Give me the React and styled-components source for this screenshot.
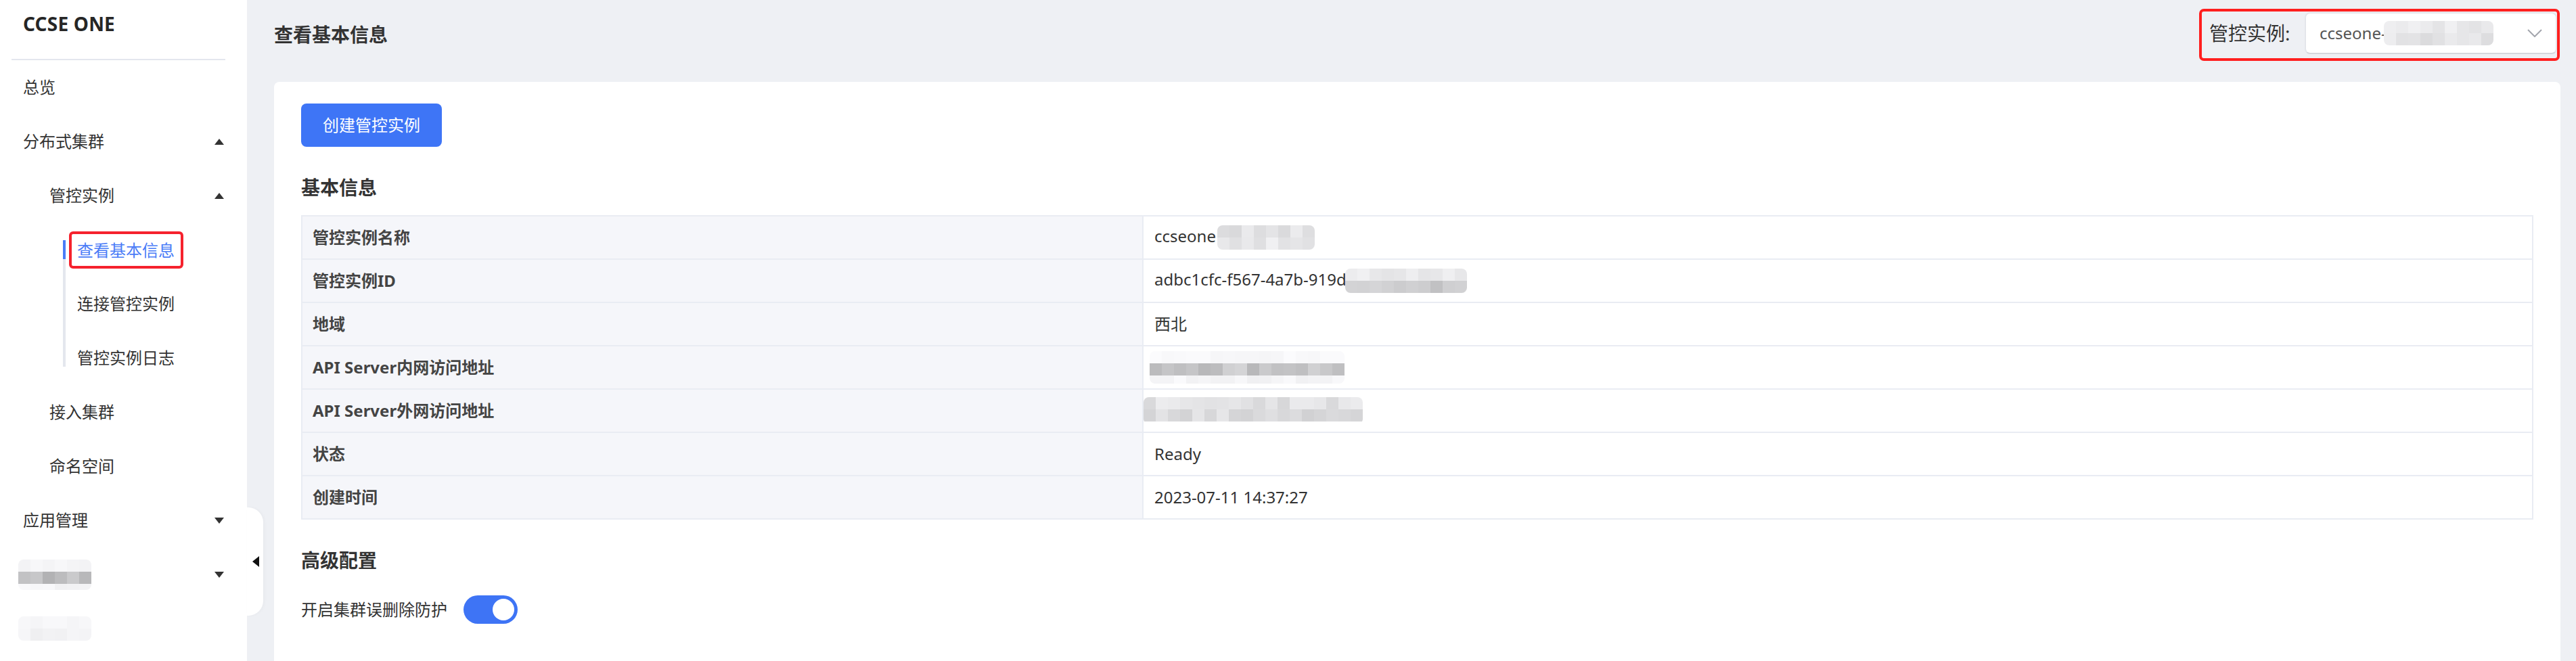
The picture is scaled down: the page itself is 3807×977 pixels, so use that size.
import React from 'react';
import styled, { createGlobalStyle } from 'styled-components';

const GlobalStyle = createGlobalStyle`
  html, body { margin: 0; padding: 0; }
  body {
    font-family: "Noto Sans", "Noto Sans CJK SC", sans-serif;
    color: #333;
    background: #eef0f4;
  }
  * { box-sizing: border-box; }
`;

const Page = styled.div`
  display: flex;
  height: 100vh;
  min-height: 977px;
  overflow: hidden;
`;

/* ---------- Sidebar ---------- */
const Sidebar = styled.aside`
  position: relative;
  z-index: 2;
  flex: none;
  width: 365px;
  background: #fff;
`;

const Brand = styled.div`
  height: 70px;
  padding-left: 34px;
  font-size: 28px;
  font-weight: 700;
  line-height: 70px;
  color: #262626;
  letter-spacing: 0.2px;
`;

const Divider = styled.div`
  height: 2px;
  margin: 17px 32px 0 17px;
  background: #e3e6ee;
`;

const Menu = styled.nav`
  display: flex;
  flex-direction: column;
`;

const indent = { 1: 34, 2: 73, 3: 114 };

const MenuItem = styled.div`
  position: relative;
  display: flex;
  align-items: center;
  justify-content: space-between;
  height: 80px;
  padding: 0 34px 0 ${(p) => indent[p.$level]}px;
  font-size: 24px;
  line-height: 32px;
  color: ${(p) => (p.$active ? '#4a7cf7' : '#333')};
  ${(p) =>
    p.$active &&
    `
    &::before {
      content: '';
      position: absolute;
      left: 93px;
      top: 26px;
      width: 4px;
      height: 28px;
      background: #4a7cf7;
    }
  `}
`;

const SubGroup = styled.div`
  position: relative;
  &::before {
    content: '';
    position: absolute;
    left: 93px;
    top: 26px;
    bottom: 27px;
    width: 4px;
    background: #e4e7ee;
  }
`;

const Highlight = styled.span`
  display: inline-block;
  margin-left: -12px;
  padding: 8px 9px 8px 8px;
  border: 4px solid #f5222d;
  border-radius: 6px;
  line-height: 31px;
`;

const Caret = styled.span`
  flex: none;
  width: 0;
  height: 0;
  border-left: 7.5px solid transparent;
  border-right: 7.5px solid transparent;
  ${(p) =>
    p.$dir === 'up'
      ? 'border-bottom: 9px solid #333;'
      : 'border-top: 9px solid #333;'}
`;

const CollapseTab = styled.div`
  position: absolute;
  left: 100%;
  top: 750px;
  width: 24px;
  height: 160px;
  display: flex;
  align-items: center;
  padding-left: 8px;
  background: #fff;
  border-radius: 0 22px 22px 0;
  box-shadow: 2px 0 4px rgba(0, 0, 0, 0.03);
`;

const TabArrow = styled.span`
  width: 0;
  height: 0;
  border-top: 8px solid transparent;
  border-bottom: 8px solid transparent;
  border-right: 10px solid #111;
`;

/* ---------- Mosaic (redacted text) ---------- */
const Mosaic = styled.span`
  display: inline-grid;
  grid-template-columns: repeat(${(p) => p.$cols}, 18px);
  grid-auto-rows: 18px;
  height: ${(p) => p.$h}px;
  overflow: hidden;
  vertical-align: middle;
  margin-left: ${(p) => p.$ml || 0}px;
  border-radius: 8px;
  filter: blur(0.5px);
`;

const Cell = styled.span`
  background: ${(p) => p.$c};
`;

function grays(seed, count, lo, hi) {
  let s = seed;
  const out = [];
  for (let i = 0; i < count; i++) {
    s = (s * 9301 + 49297) % 233280;
    const v = Math.round(lo + (s / 233280) * (hi - lo));
    out.push(`rgb(${v},${v},${Math.min(255, v + 2)})`);
  }
  return out;
}

function Redacted({ cols, rows, h, ml, seed = 7 }) {
  const cells = [];
  rows.forEach(([lo, hi], r) => {
    grays(seed + r * 31, cols, lo, hi).forEach((c, i) =>
      cells.push(<Cell key={`${r}-${i}`} $c={c} />)
    );
  });
  return (
    <Mosaic $cols={cols} $h={h} $ml={ml}>
      {cells}
    </Mosaic>
  );
}

/* ---------- Main ---------- */
const Main = styled.main`
  flex: 1;
  min-width: 0;
  display: flex;
  flex-direction: column;
  background: #eef0f4;
`;

const Header = styled.header`
  flex: none;
  height: 102px;
  display: flex;
  align-items: center;
  justify-content: space-between;
  padding: 0 24px 0 40px;
`;

const PageTitle = styled.h1`
  margin: 0;
  font-size: 28px;
  font-weight: 700;
  line-height: 40px;
  color: #333;
`;

const RedBox = styled.div`
  display: flex;
  align-items: flex-start;
  gap: 19px;
  width: 533px;
  height: 77px;
  padding: 1px 0 0 11px;
  border: 4px solid #ff1f1f;
  border-radius: 7px;
  overflow: hidden;
`;

const SelectLabel = styled.span`
  flex: none;
  width: 122px;
  font-size: 28px;
  line-height: 62px;
  color: #333;
`;

const SelectBox = styled.div`
  flex: 1;
  height: 62px;
  display: flex;
  align-items: center;
  justify-content: space-between;
  padding: 0 20px 0 20px;
  background: #fff;
  border: 2px solid #e4e6eb;
  border-bottom-color: #d5d7dd;
  border-radius: 8px;
`;

const SelectValue = styled.span`
  display: flex;
  align-items: center;
  font-size: 24px;
  line-height: 32px;
  color: #555;
`;

const Card = styled.section`
  flex: 1;
  margin: 19px 23px 0 40px;
  padding: 32px 40px;
  background: #fff;
  border-radius: 8px 8px 0 0;
`;

const PrimaryButton = styled.button`
  height: 64px;
  padding: 0 32px;
  border: none;
  border-radius: 8px;
  background: #3e75f6;
  color: #fff;
  font-family: inherit;
  font-size: 24px;
  line-height: 32px;
  cursor: pointer;
`;

const SectionTitle = styled.h2`
  margin: 40px 0 0;
  font-size: 28px;
  font-weight: 700;
  line-height: 40px;
  color: #333;
`;

const InfoTable = styled.table`
  width: 100%;
  margin-top: 21px;
  border-collapse: collapse;
  border: 2px solid #e9ecf3;
`;

const Row = styled.tr`
  height: 64px;
`;

const LabelCell = styled.td`
  width: 37.7%;
  padding: 0 15px;
  background: #f5f6fa;
  border: 2px solid #e9ecf3;
  font-size: 24px;
  font-weight: 700;
  line-height: 32px;
  color: #444;
`;

const ValueCell = styled.td`
  padding: 0 16px;
  background: #fff;
  border: 2px solid #e9ecf3;
  font-size: 24px;
  line-height: 32px;
  color: #333;
  white-space: nowrap;
`;

const SwitchRow = styled.div`
  display: flex;
  align-items: center;
  gap: 24px;
  margin-top: 32px;
  font-size: 24px;
  line-height: 32px;
  color: #333;
`;

const Switch = styled.span`
  display: inline-flex;
  align-items: center;
  justify-content: ${(p) => (p.$on ? 'flex-end' : 'flex-start')};
  width: 80px;
  height: 42px;
  padding: 0 5px;
  border-radius: 21px;
  background: ${(p) => (p.$on ? '#3e74f5' : '#c5c8d0')};
`;

const Knob = styled.span`
  width: 32px;
  height: 32px;
  border-radius: 50%;
  background: #fff;
`;

const Chevron = () => (
  <svg width="22" height="12" viewBox="0 0 22 12" fill="none">
    <polyline points="1,1 11,11 21,1" stroke="#a3a6ad" strokeWidth="2" />
  </svg>
);

const rows = [
  ['管控实例名称', <>ccseone<Redacted cols={8} h={36} rows={[[212, 236], [222, 240]]} seed={3} ml={2} /></>],
  ['管控实例ID', <>adbc1cfc-f567-4a7b-919d<Redacted cols={10} h={36} rows={[[226, 242], [192, 214]]} seed={11} ml={-2} /></>],
  ['地域', '西北'],
  ['API Server内网访问地址', <Redacted cols={16} h={48} rows={[[244, 251], [180, 214], [240, 250]]} seed={19} ml={-7} />],
  ['API Server外网访问地址', <Redacted cols={18} h={40} rows={[[214, 238], [200, 232]]} seed={23} ml={-16} />],
  ['状态', 'Ready'],
  ['创建时间', '2023-07-11 14:37:27'],
];

export default function App() {
  return (
    <>
      <GlobalStyle />
      <Page>
        <Sidebar>
          <Brand>CCSE ONE</Brand>
          <Divider />
          <Menu>
            <MenuItem $level={1}>总览</MenuItem>
            <MenuItem $level={1}>
              分布式集群
              <Caret $dir="up" />
            </MenuItem>
            <MenuItem $level={2}>
              管控实例
              <Caret $dir="up" />
            </MenuItem>
            <SubGroup>
              <MenuItem $level={3} $active>
                <Highlight>查看基本信息</Highlight>
              </MenuItem>
              <MenuItem $level={3}>连接管控实例</MenuItem>
              <MenuItem $level={3}>管控实例日志</MenuItem>
            </SubGroup>
            <MenuItem $level={2}>接入集群</MenuItem>
            <MenuItem $level={2}>命名空间</MenuItem>
            <MenuItem $level={1}>
              应用管理
              <Caret $dir="down" />
            </MenuItem>
            <MenuItem $level={1}>
              <Redacted cols={6} h={45} rows={[[240, 248], [172, 206], [240, 250]]} seed={5} ml={-7} />
              <Caret $dir="down" />
            </MenuItem>
            <MenuItem $level={1}>
              <Redacted cols={6} h={36} rows={[[243, 250], [238, 248]]} seed={9} ml={-7} />
            </MenuItem>
          </Menu>
          <CollapseTab>
            <TabArrow />
          </CollapseTab>
        </Sidebar>

        <Main>
          <Header>
            <PageTitle>查看基本信息</PageTitle>
            <RedBox>
              <SelectLabel>管控实例:</SelectLabel>
              <SelectBox>
                <SelectValue>
                  ccseone-
                  <Redacted cols={9} h={36} rows={[[226, 242], [214, 238]]} seed={13} ml={-4} />
                </SelectValue>
                <Chevron />
              </SelectBox>
            </RedBox>
          </Header>

          <Card>
            <PrimaryButton>创建管控实例</PrimaryButton>
            <SectionTitle>基本信息</SectionTitle>
            <InfoTable>
              <tbody>
                {rows.map(([label, value]) => (
                  <Row key={label}>
                    <LabelCell>{label}</LabelCell>
                    <ValueCell>{value}</ValueCell>
                  </Row>
                ))}
              </tbody>
            </InfoTable>
            <SectionTitle>高级配置</SectionTitle>
            <SwitchRow>
              开启集群误删除防护
              <Switch $on>
                <Knob />
              </Switch>
            </SwitchRow>
          </Card>
        </Main>
      </Page>
    </>
  );
}
